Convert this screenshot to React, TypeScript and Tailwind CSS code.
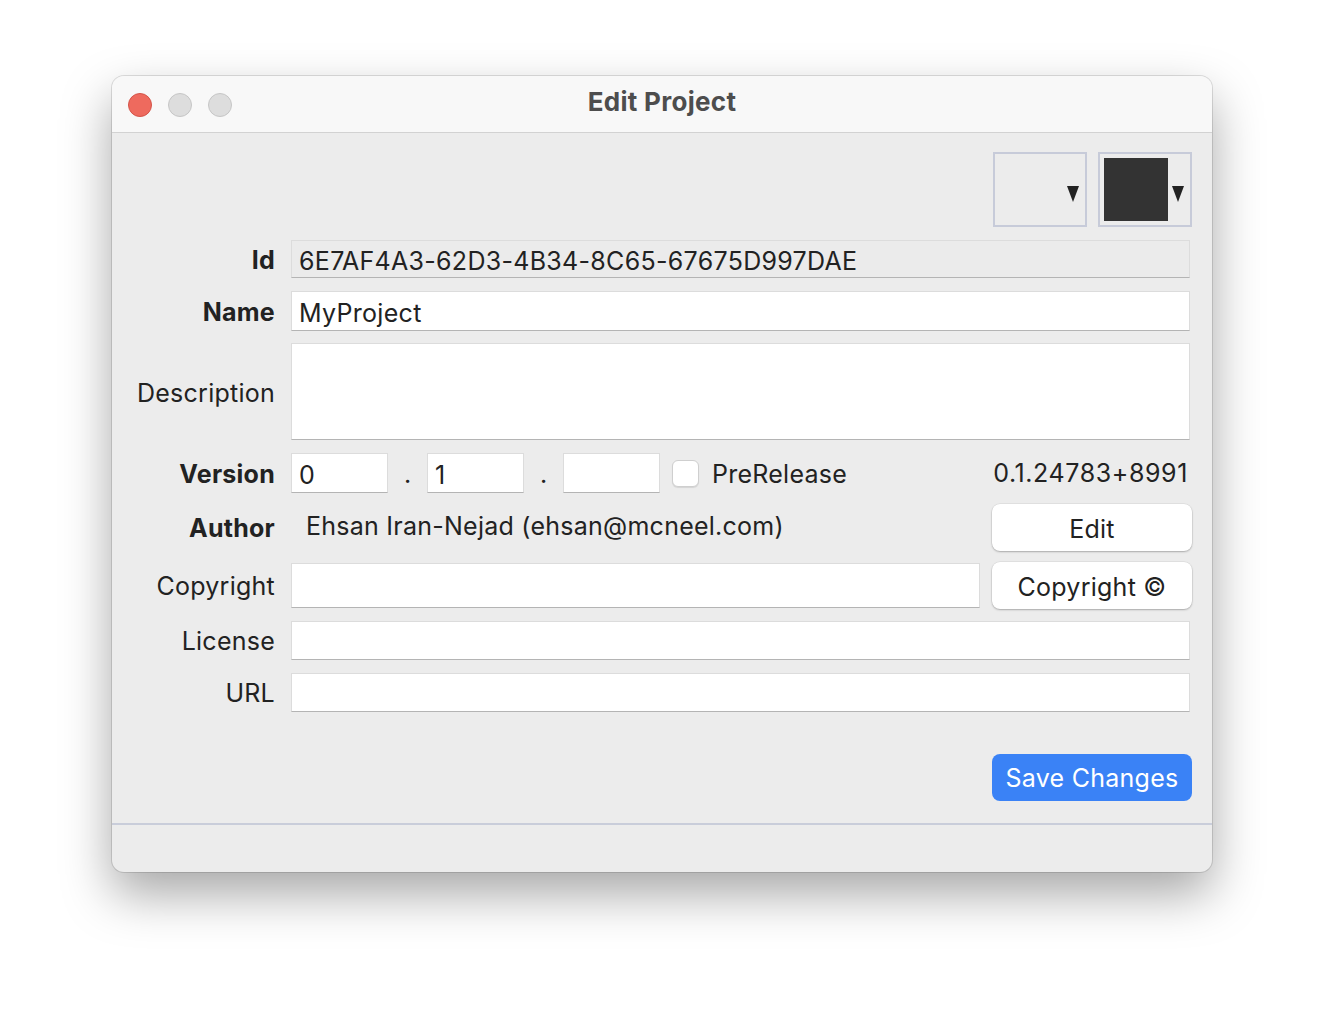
import React from 'react';

const font = { fontFamily: 'Inter, "Noto Sans", sans-serif' };

function Field({ value = '', className = '', bg = 'bg-white' }: { value?: string; className?: string; bg?: string }) {
  return (
    <div
      className={`flex items-center ${bg} border border-[#dcdcdc] border-b-[#b4b4b4] pl-[7px] pt-[3px] text-[25px] leading-[32px] tracking-[0.3px] text-[#222] ${className}`}
    >
      {value}
    </div>
  );
}

function Label({ text, bold = false }: { text: string; bold?: boolean }) {
  return (
    <div className={`w-[163px] shrink-0 pt-[2px] text-right text-[25px] leading-[32px] tracking-[0.25px] text-[#222] ${bold ? 'font-bold' : ''}`}>
      {text}
    </div>
  );
}

function MacButton({ children }: { children: React.ReactNode }) {
  return (
    <button className="w-[200px] h-[47px] shrink-0 pt-[3px] rounded-[8px] bg-white text-[25px] leading-[32px] tracking-[0.25px] text-[#222] shadow-[0_1px_2px_rgba(0,0,0,0.25),0_0_0_0.5px_rgba(0,0,0,0.08)]">
      {children}
    </button>
  );
}

export default function App() {
  return (
    <div className="w-[1324px] h-[1020px] bg-white pt-[76px] pl-[112px]" style={font}>
      <div className="w-[1100px] h-[796px] rounded-[12px] overflow-hidden bg-[#ececec] flex flex-col shadow-[0_22px_50px_rgba(0,0,0,0.35),0_0_0_1px_rgba(0,0,0,0.12)]">
        {/* title bar */}
        <div className="relative h-[57px] shrink-0 bg-[#f8f8f8] border-b border-[#d2d2d2] flex items-center">
          <div className="flex gap-[16px] pl-[16px] pt-[1px]">
            <span className="w-[24px] h-[24px] rounded-full bg-[#ee6a5e] border border-[#d45449]" />
            <span className="w-[24px] h-[24px] rounded-full bg-[#dddddd] border border-[#c6c6c6]" />
            <span className="w-[24px] h-[24px] rounded-full bg-[#dddddd] border border-[#c6c6c6]" />
          </div>
          <div className="absolute inset-x-0 top-[6px] text-center text-[26px] tracking-[0.3px] font-bold text-[#4d4d4d] pointer-events-none">
            Edit Project
          </div>
        </div>

        {/* content */}
        <div className="flex-1 flex flex-col pr-[20px] pt-[19px]">
          <div className="flex justify-end gap-[11px]">
            <div className="w-[94px] h-[75px] border-2 border-[#c7cbd9] flex items-center justify-end pr-[6px] pt-[8px]">
              <svg width="12" height="16" viewBox="0 0 12 16"><path d="M0 0H12L6 16Z" fill="#222" /></svg>
            </div>
            <div className="w-[94px] h-[75px] border-2 border-[#c7cbd9] flex items-center pl-[4px] gap-[4px]">
              <div className="w-[64px] h-[63px] bg-[#333333]" />
              <svg className="mt-[8px]" width="12" height="16" viewBox="0 0 12 16"><path d="M0 0H12L6 16Z" fill="#222" /></svg>
            </div>
          </div>

          <div className="flex items-center gap-[16px] mt-[13px]">
            <Label text="Id" bold />
            <Field value="6E7AF4A3-62D3-4B34-8C65-67675D997DAE" bg="bg-[#ebebeb]" className="flex-1 h-[38px] mr-[2px]" />
          </div>

          <div className="flex items-center gap-[16px] mt-[13px]">
            <Label text="Name" bold />
            <Field value="MyProject" className="flex-1 h-[40px] mr-[2px]" />
          </div>

          <div className="flex items-center gap-[16px] mt-[12px]">
            <Label text="Description" />
            <Field className="flex-1 h-[97px] mr-[2px]" />
          </div>

          <div className="flex items-center gap-[16px] mt-[13px]">
            <Label text="Version" bold />
            <div className="flex-1 flex items-center">
              <Field value="0" className="w-[97px] h-[40px]" />
              <span className="w-[39px] text-center text-[25px] text-[#222] pt-[3px]">.</span>
              <Field value="1" className="w-[97px] h-[40px]" />
              <span className="w-[39px] text-center text-[25px] text-[#222] pt-[3px]">.</span>
              <Field className="w-[97px] h-[40px]" />
              <div className="ml-[12px] w-[27px] h-[27px] rounded-[6px] bg-white border border-[#cfcfcf] shadow-[0_1px_1px_rgba(0,0,0,0.1)]" />
              <span className="ml-[13px] pt-[2px] text-[25px] tracking-[0.25px] text-[#222]">PreRelease</span>
              <span className="ml-auto mr-[4px] text-[25px] tracking-[0.6px] text-[#222]">0.1.24783+8991</span>
            </div>
          </div>

          <div className="flex items-center gap-[16px] mt-[10px]">
            <Label text="Author" bold />
            <span className="flex-1 pl-[15px] text-[25px] tracking-[0.25px] text-[#222]">Ehsan Iran-Nejad (ehsan@mcneel.com)</span>
            <MacButton>Edit</MacButton>
          </div>

          <div className="flex items-center gap-[16px] mt-[11px]">
            <Label text="Copyright" />
            <div className="flex-1 flex items-center gap-[12px]">
              <Field className="flex-1 h-[45px]" />
              <MacButton>Copyright ©</MacButton>
            </div>
          </div>

          <div className="flex items-center gap-[16px] mt-[12px]">
            <Label text="License" />
            <Field className="flex-1 h-[39px] mr-[2px]" />
          </div>

          <div className="flex items-center gap-[16px] mt-[13px]">
            <Label text="URL" />
            <Field className="flex-1 h-[39px] mr-[2px]" />
          </div>

          <div className="flex justify-end mt-[42px]">
            <button className="w-[200px] h-[47px] pt-[3px] rounded-[8px] bg-[#3a82f6] text-white text-[25px] tracking-[0.25px]">
              Save Changes
            </button>
          </div>
        </div>

        <div className="h-[49px] shrink-0 border-t-2 border-[#c9cdda]" />
      </div>
    </div>
  );
}
